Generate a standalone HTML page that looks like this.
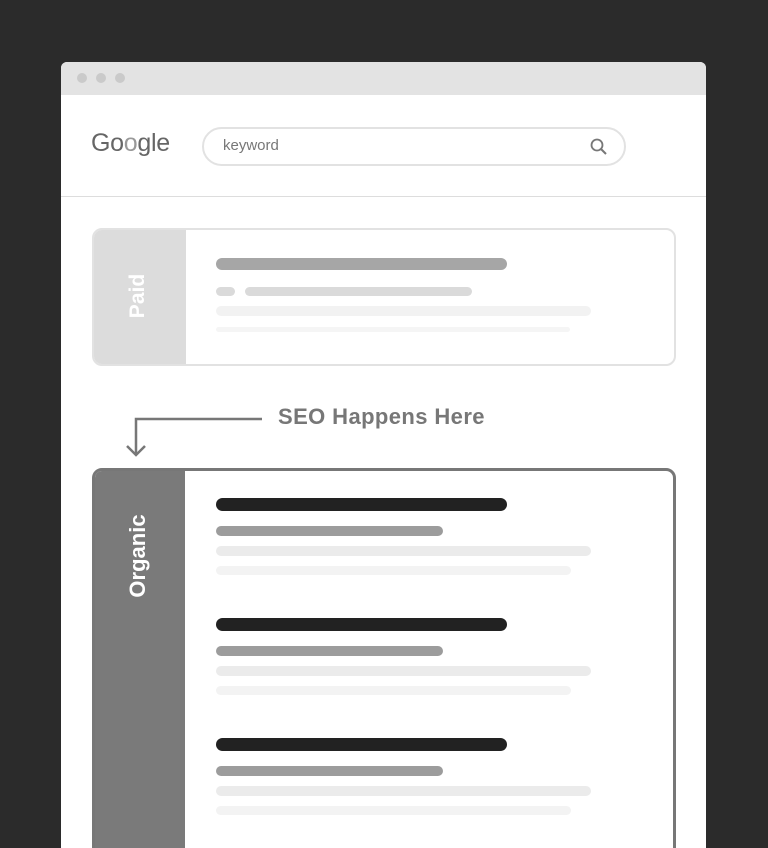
<!DOCTYPE html>
<html style="overflow:hidden"><head><style>
html,body{margin:0;width:768px;height:848px;overflow:hidden}
body{background:#2b2b2b;position:relative;font-family:"Liberation Sans",sans-serif}
.a{position:absolute}
.b{position:absolute;border-radius:7px}
</style></head><body>
<div class="a" style="left:61px;top:62px;width:645px;height:786px;background:#fff;border-radius:6px 6px 0 0;overflow:hidden">
 <div class="a" style="left:0;top:0;width:645px;height:33px;background:#e3e3e3"></div>
 <div class="a" style="left:16px;top:11px;width:10px;height:10px;border-radius:50%;background:#cacaca"></div>
 <div class="a" style="left:35px;top:11px;width:10px;height:10px;border-radius:50%;background:#cacaca"></div>
 <div class="a" style="left:54px;top:11px;width:10px;height:10px;border-radius:50%;background:#cacaca"></div>
 <div class="a" style="left:0;top:134px;width:645px;height:1px;background:#ddd"></div>
</div>
<div class="a" style="left:91px;top:129px;font-size:25px;color:#666;letter-spacing:-0.3px">Go<span style="color:#999">o</span>gle</div>
<div class="a" style="left:202px;top:127px;width:420px;height:35px;border:2px solid #e2e2e2;border-radius:20px"></div>
<div class="a" style="left:223px;top:137px;font-size:15px;color:#777">keyword</div>
<svg class="a" style="left:589px;top:137px" width="20" height="20"><circle cx="8" cy="8" r="5.5" fill="none" stroke="#777" stroke-width="1.8"/><line x1="12" y1="12" x2="17" y2="17" stroke="#777" stroke-width="2"/></svg>

<div class="a" style="left:92px;top:228px;width:580px;height:134px;border:2px solid #e2e2e2;border-radius:10px;overflow:hidden">
 <div class="a" style="left:0;top:0;width:92px;height:134px;background:#dcdcdc"></div>
</div>
<div class="a" style="left:88px;top:284px;width:100px;text-align:center;transform:rotate(-90deg);color:#fff;font-weight:bold;font-size:21px">Paid</div>
<div class="b" style="left:216px;top:258px;width:291px;height:12px;background:#a6a6a6"></div>
<div class="b" style="left:216px;top:287px;width:19px;height:9px;background:#dadada"></div>
<div class="b" style="left:245px;top:287px;width:227px;height:9px;background:#dadada"></div>
<div class="b" style="left:216px;top:306px;width:375px;height:10px;background:#f2f2f2"></div>
<div class="b" style="left:216px;top:327px;width:354px;height:5px;background:#f5f5f5"></div>

<svg class="a" style="left:120px;top:410px" width="150" height="50"><path d="M142 9H16V45" fill="none" stroke="#777" stroke-width="2.5"/><path d="M7 36L16 45L25 36" fill="none" stroke="#777" stroke-width="2.5"/></svg>
<div class="a" style="left:278px;top:404px;font-size:22px;font-weight:bold;color:#777;letter-spacing:0.4px">SEO Happens Here</div>

<div class="a" style="left:92px;top:468px;width:578px;height:400px;border:3px solid #777;border-radius:10px;overflow:hidden">
 <div class="a" style="left:0;top:0;width:90px;height:400px;background:#7a7a7a"></div>
</div>
<div class="a" style="left:73px;top:543px;width:130px;text-align:center;transform:rotate(-90deg);color:#fff;font-weight:bold;font-size:22px">Organic</div>

<div class="b" style="left:216px;top:498px;width:291px;height:13px;background:#222"></div>
<div class="b" style="left:216px;top:526px;width:227px;height:10px;background:#9c9c9c"></div>
<div class="b" style="left:216px;top:546px;width:375px;height:10px;background:#ebebeb"></div>
<div class="b" style="left:216px;top:566px;width:355px;height:9px;background:#f3f3f3"></div>

<div class="b" style="left:216px;top:618px;width:291px;height:13px;background:#222"></div>
<div class="b" style="left:216px;top:646px;width:227px;height:10px;background:#9c9c9c"></div>
<div class="b" style="left:216px;top:666px;width:375px;height:10px;background:#ebebeb"></div>
<div class="b" style="left:216px;top:686px;width:355px;height:9px;background:#f3f3f3"></div>

<div class="b" style="left:216px;top:738px;width:291px;height:13px;background:#222"></div>
<div class="b" style="left:216px;top:766px;width:227px;height:10px;background:#9c9c9c"></div>
<div class="b" style="left:216px;top:786px;width:375px;height:10px;background:#ebebeb"></div>
<div class="b" style="left:216px;top:806px;width:355px;height:9px;background:#f3f3f3"></div>
</body></html>
